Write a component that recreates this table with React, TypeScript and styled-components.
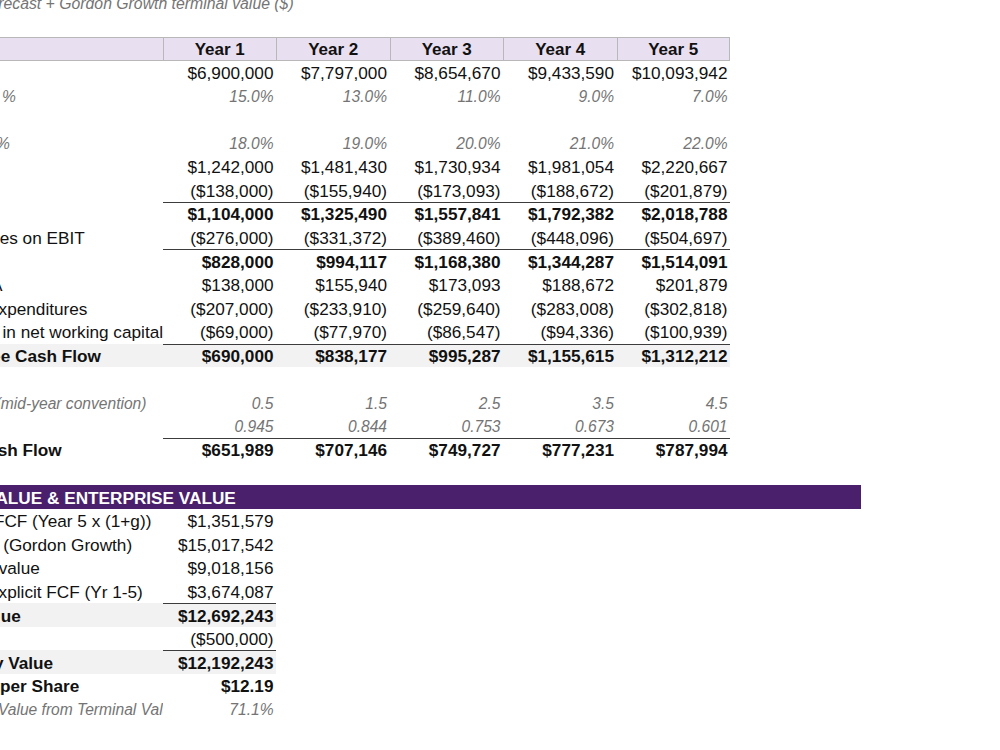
import React from "react";
import styled, { createGlobalStyle, css } from "styled-components";

const GlobalStyle = createGlobalStyle`
  html, body { margin: 0; padding: 0; background: #ffffff; overflow: hidden; }
  body { font-family: "Liberation Sans", Arial, Helvetica, sans-serif; color: #111; }
`;

type Tone = "normal" | "bold" | "muted";

const COLS = "282.5px repeat(5, 113.5px) 131px";

const Sheet = styled.div`
  width: 981px;
  margin: -10.2px 0 0 -120px;
  display: flex;
  flex-direction: column;
`;

const Row = styled.div`
  display: grid;
  grid-template-columns: ${COLS};
  height: 23.6px;
`;

const toneStyle = (tone: Tone) => {
  if (tone === "bold")
    return css`
      font-size: 17.2px;
      font-weight: 700;
      color: #111;
    `;
  if (tone === "muted")
    return css`
      font-size: 15.6px;
      font-style: italic;
      color: #747474;
    `;
  return css`
    font-size: 17.2px;
    color: #111;
  `;
};

const Title = styled.div`
  grid-column: 1 / -1;
  padding: 5px 0 0 0;
  font-size: 15.8px;
  font-style: italic;
  color: #747474;
  white-space: nowrap;
  display: flex;
  align-items: center;
`;

const HeadLabel = styled.div`
  background: #e8dff0;
  border-top: 1px solid #b8b8b8;
  border-bottom: 1px solid #b8b8b8;
`;

const HeadCell = styled.div<{ $last?: boolean }>`
  background: #e8dff0;
  border: 1px solid #b8b8b8;
  border-right: ${(p) => (p.$last ? "1px solid #b8b8b8" : "none")};
  box-sizing: border-box;
  padding-top: 2px;
  display: flex;
  align-items: center;
  justify-content: center;
  font-size: 17px;
  font-weight: 700;
  color: #111;
`;

const Label = styled.div<{ $tone: Tone; $shade?: boolean; $indent: number }>`
  ${(p) => toneStyle(p.$tone)};
  background: ${(p) => (p.$shade ? "#f2f2f2" : "transparent")};
  padding: 2px 0 0 ${(p) => p.$indent}px;
  white-space: nowrap;
  overflow: hidden;
  display: flex;
  align-items: center;
`;

const Num = styled.div<{ $tone: Tone; $shade?: boolean; $rule?: boolean }>`
  ${(p) => toneStyle(p.$tone)};
  background: ${(p) => (p.$shade ? "#f2f2f2" : "transparent")};
  border-top: ${(p) => (p.$rule ? "1px solid #3c3c3c" : "1px solid transparent")};
  box-sizing: border-box;
  padding: 1px 2.5px 0 0;
  white-space: nowrap;
  display: flex;
  align-items: center;
  justify-content: flex-end;
`;

const Banner = styled.div`
  grid-column: 1 / -1;
  background: #4a1f6b;
  color: #ffffff;
  font-size: 17.2px;
  font-weight: 700;
  padding: 2px 0 0 12px;
  white-space: nowrap;
  display: flex;
  align-items: center;
`;

type Line = {
  label?: string;
  tone?: Tone;
  values?: string[];
  rule?: boolean;
  shade?: boolean;
  indent?: number;
};

const forecast: Line[] = [
  { label: "Revenue", values: ["$6,900,000", "$7,797,000", "$8,654,670", "$9,433,590", "$10,093,942"] },
  { label: "Revenue growth %", tone: "muted", indent: 4, values: ["15.0%", "13.0%", "11.0%", "9.0%", "7.0%"] },
  {},
  { label: "EBITDA margin %", tone: "muted", indent: 4, values: ["18.0%", "19.0%", "20.0%", "21.0%", "22.0%"] },
  { label: "EBITDA", values: ["$1,242,000", "$1,481,430", "$1,730,934", "$1,981,054", "$2,220,667"] },
  { label: "Less: D&A", values: ["($138,000)", "($155,940)", "($173,093)", "($188,672)", "($201,879)"] },
  { label: "EBIT", tone: "bold", rule: true, values: ["$1,104,000", "$1,325,490", "$1,557,841", "$1,792,382", "$2,018,788"] },
  { label: "Less: Cash taxes on EBIT", values: ["($276,000)", "($331,372)", "($389,460)", "($448,096)", "($504,697)"] },
  { label: "NOPAT", tone: "bold", rule: true, values: ["$828,000", "$994,117", "$1,168,380", "$1,344,287", "$1,514,091"] },
  { label: "Add back: D&A", values: ["$138,000", "$155,940", "$173,093", "$188,672", "$201,879"] },
  { label: "Less: Capital Expenditures", indent: 3, values: ["($207,000)", "($233,910)", "($259,640)", "($283,008)", "($302,818)"] },
  { label: "Less: Increase in net working capital", values: ["($69,000)", "($77,970)", "($86,547)", "($94,336)", "($100,939)"] },
  { label: "Unlevered Free Cash Flow", tone: "bold", rule: true, shade: true, values: ["$690,000", "$838,177", "$995,287", "$1,155,615", "$1,312,212"] },
  {},
  { label: "Discount period (mid-year convention)", tone: "muted", indent: 3, values: ["0.5", "1.5", "2.5", "3.5", "4.5"] },
  { label: "Discount factor", tone: "muted", values: ["0.945", "0.844", "0.753", "0.673", "0.601"] },
  { label: "PV of Free Cash Flow", tone: "bold", rule: true, values: ["$651,989", "$707,146", "$749,727", "$777,231", "$787,994"] },
  {},
];

const valuation: Line[] = [
  { label: "Terminal year FCF (Year 5 x (1+g))", values: ["$1,351,579"] },
  { label: "Terminal Value (Gordon Growth)", values: ["$15,017,542"] },
  { label: "PV of terminal value", values: ["$9,018,156"] },
  { label: "Sum of PV of explicit FCF (Yr 1-5)", indent: 3, values: ["$3,674,087"] },
  { label: "Enterprise Value", tone: "bold", rule: true, shade: true, values: ["$12,692,243"] },
  { label: "Less: Net Debt", values: ["($500,000)"] },
  { label: "Implied Equity Value", tone: "bold", rule: true, shade: true, values: ["$12,192,243"] },
  { label: "Equity Value per Share", tone: "bold", indent: 13, values: ["$12.19"] },
  { label: "% of Enterprise Value from Terminal Value", tone: "muted", indent: 7, values: ["71.1%"] },
];

const DataRow: React.FC<{ line: Line }> = ({ line }) => {
  const tone = line.tone ?? "normal";
  return (
    <Row>
      <Label $tone={tone} $shade={line.shade} $indent={line.indent ?? 6}>
        {line.label ?? ""}
      </Label>
      {(line.values ?? []).map((v, i) => (
        <Num key={i} $tone={tone} $shade={line.shade} $rule={line.rule}>
          {v}
        </Num>
      ))}
    </Row>
  );
};

const years = ["Year 1", "Year 2", "Year 3", "Year 4", "Year 5"];

export default function App() {
  return (
    <>
      <GlobalStyle />
      <Sheet>
        <Row>
          <Title>Five-year FCF forecast + Gordon Growth terminal value ($)</Title>
        </Row>
        <Row />
        <Row>
          <HeadLabel />
          {years.map((y, i) => (
            <HeadCell key={y} $last={i === years.length - 1}>
              {y}
            </HeadCell>
          ))}
        </Row>
        {forecast.map((line, i) => (
          <DataRow key={`f${i}`} line={line} />
        ))}
        <Row>
          <Banner>TERMINAL VALUE &amp; ENTERPRISE VALUE</Banner>
        </Row>
        {valuation.map((line, i) => (
          <DataRow key={`v${i}`} line={line} />
        ))}
      </Sheet>
    </>
  );
}
